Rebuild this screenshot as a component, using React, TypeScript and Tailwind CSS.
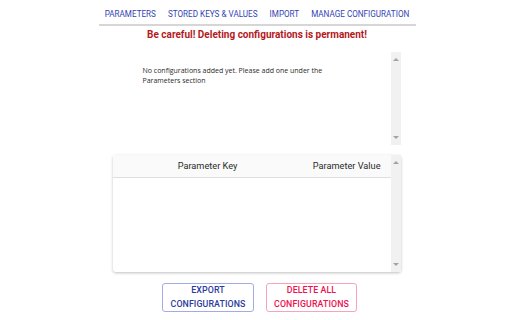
import React from 'react';

const ScrollBar = () => (
  <div className="flex w-[10px] shrink-0 flex-col items-center justify-between bg-[#f1f1f1] py-[6px]">
    <div className="h-0 w-0 border-x-[3px] border-b-[3px] border-x-transparent border-b-[#a3a3a3]" />
    <div className="h-0 w-0 border-x-[3px] border-t-[3px] border-x-transparent border-t-[#a3a3a3]" />
  </div>
);

const tabs = ['PARAMETERS', 'STORED KEYS & VALUES', 'IMPORT', 'MANAGE CONFIGURATION'];

const App = () => {
  return (
    <div className="h-[320px] w-[512px] overflow-hidden bg-white font-['Roboto',sans-serif]">
      <div className="mx-auto w-[319px] pl-[2px]">
        {/* Tabs */}
        <nav className="flex h-[26px] items-center justify-center gap-[12px] border-b-2 border-[#d6d6d6] pt-[5px] text-[8.15px] whitespace-nowrap text-[#3444b3]">
          {tabs.map((t) => (
            <span key={t} className="shrink-0">{t}</span>
          ))}
        </nav>

        <p className="mt-[2px] text-center text-[10px] leading-[14px] font-bold text-[#b3191d]">
          Be careful! Deleting configurations is permanent!
        </p>

        {/* Configurations list */}
        <div className="mt-[10px] ml-[14px] flex h-[93px] w-[288px]">
          <div className="flex-1 pt-[14px] pl-[30px] pr-[50px] font-['Open_Sans',sans-serif] text-[7px] leading-[10px] text-[#2a2a2a]">
            No configurations added yet. Please add one under the Parameters section
          </div>
          <ScrollBar />
        </div>

        {/* Table */}
        <div className="mt-[10px] ml-[14px] flex h-[117px] w-[288px] rounded-[3px] shadow-[0_1px_3px_rgba(0,0,0,0.25)]">
          <div className="flex flex-1 flex-col">
            <div className="flex h-[23px] items-center border-b border-[#e0e0e0] bg-[#fafafa] text-[9.2px] text-[#2b2b2b]">
              <span className="w-[185px] pl-[5px] text-center">Parameter Key</span>
              <span className="flex-1 pr-[10px] text-right">Parameter Value</span>
            </div>
            <div className="flex-1" />
          </div>
          <ScrollBar />
        </div>

        {/* Actions */}
        <div className="mt-[11px] ml-[5px] flex justify-center gap-[12px] text-[8.8px] leading-[14px] font-medium tracking-[0.1px]">
          <button className="flex h-[29px] w-[92px] flex-col items-center justify-center rounded-[3px] border border-[#a3abe6] pb-[1px] text-[#2c3a9e]">
            <span>EXPORT</span>
            <span>CONFIGURATIONS</span>
          </button>
          <button className="flex h-[29px] w-[91px] flex-col items-center justify-center rounded-[3px] border border-[#f7a3bd] pb-[1px] text-[#f0104f]">
            <span>DELETE ALL</span>
            <span>CONFIGURATIONS</span>
          </button>
        </div>
      </div>
    </div>
  );
};

export default App;
